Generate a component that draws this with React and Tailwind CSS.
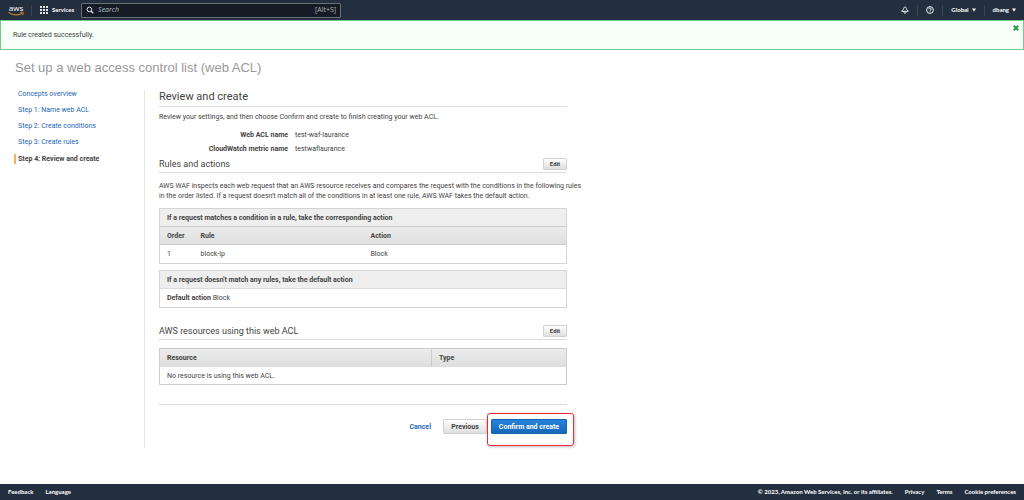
import React from "react";

function AwsLogo() {
  return (
    <span className="block font-['Open_Sans',sans-serif]">
      <span className="block text-center text-[8px] leading-[7px] font-medium">aws</span>
      <svg viewBox="0 0 16 5" className="h-[5px] w-4" fill="none" stroke="#f0972a" strokeLinecap="round" aria-hidden="true">
        <path d="M0.6 1.4C4.5 4.6 10.5 4.6 14 2.4" />
        <path d="M12.6 1.3C14 1 15.2 0.9 15.3 1.4C15.4 2 15 3 14.5 3.9" strokeWidth="0.8" />
      </svg>
    </span>
  );
}

function GridIcon() {
  return (
    <svg viewBox="0 0 8 8" className="size-2" fill="#e4e7ea" aria-hidden="true">
      {[0, 3, 6].map((y) => [0, 3, 6].map((x) => <rect key={`${x}-${y}`} x={x} y={y} width="2" height="2" />))}
    </svg>
  );
}

function Divider() {
  return <span className="h-[11px] w-px bg-[#3b4655]" />;
}

function Caret() {
  return (
    <svg viewBox="0 0 4 4" className="size-1" fill="#fff" aria-hidden="true">
      <path d="M0 0.5h4L2 3.7z" />
    </svg>
  );
}

function TopBar() {
  return (
    <header className="flex h-5 items-center bg-[#232f3e] pr-2 pl-2 font-[Lato,sans-serif] text-[6px] leading-[8px] font-bold text-white">
      <a href="#home" aria-label="AWS home"><AwsLogo /></a>
      <span className="ml-[7px] flex"><Divider /></span>
      <button type="button" className="ml-2 flex items-center gap-1">
        <GridIcon />
        Services
      </button>
      <label className="ml-[7px] flex h-[15px] w-[260px] items-center rounded-[1px] border border-[#687078] bg-[#161c26] px-1 font-['Open_Sans',sans-serif]">
        <svg viewBox="0 0 8 8" className="size-2 shrink-0" fill="none" stroke="#eaeded" aria-hidden="true">
          <circle cx="3.4" cy="3.4" r="2.3" />
          <path d="M5.1 5.1l2.1 2.1" strokeWidth="1.3" />
        </svg>
        <input type="text" aria-label="Search" placeholder="Search" className="ml-1 min-w-0 flex-1 bg-transparent text-[7px] font-normal outline-none placeholder:text-[#b5bcc2] placeholder:italic" />
        <span className="text-[7px] font-normal text-[#aab7b8]">[Alt+S]</span>
      </label>
      <div className="ml-auto flex items-center gap-2">
        <button type="button" aria-label="Notifications">
          <svg viewBox="0 0 8 8" className="size-2" fill="none" stroke="#eaeded" strokeLinejoin="round" aria-hidden="true">
            <path d="M4 0.7C2.9 1.3 2.7 2.3 2.4 3.3L0.6 5.3h6.8L5.6 3.3C5.3 2.3 5.1 1.3 4 0.7zM3 5.5v1.1l1 .8 1-.8V5.5" />
          </svg>
        </button>
        <Divider />
        <button type="button" aria-label="Help">
          <svg viewBox="0 0 8 8" className="size-2" fill="none" stroke="#eaeded" aria-hidden="true">
            <circle cx="4" cy="4" r="3.4" />
            <path d="M2.8 3.2c0-1.7 2.4-1.5 2.4-.1 0 .9-1.2.9-1.2 1.8M4 5.5v.9" />
          </svg>
        </button>
        <Divider />
        <button type="button" className="flex items-center gap-[3px]">Global <Caret /></button>
        <Divider />
        <button type="button" className="flex items-center gap-[3px]">dbang <Caret /></button>
      </div>
    </header>
  );
}

const steps = ["Concepts overview", "Step 1: Name web ACL", "Step 2: Create conditions", "Step 3: Create rules"];

function Steps() {
  return (
    <nav className="w-[131px] shrink-0 border-r border-[#e6e6e6]">
      <ul>
        {steps.map((step) => (
          <li key={step} className="h-4 pl-1 leading-[8px]">
            <a href="#step" className="text-[#1f66b8]">{step}</a>
          </li>
        ))}
        <li aria-current="step" className="border-l-2 border-[#f2b267] pl-[2px] leading-[10px] font-bold">Step 4: Review and create</li>
      </ul>
    </nav>
  );
}

function SectionHeading({ children }) {
  return (
    <div className="flex items-center justify-between border-b border-[#ddd]">
      <h3 className="text-[9px] leading-[16px]">{children}</h3>
      <button type="button" className="h-3 w-6 rounded-[1px] border border-[#d0d0d0] bg-linear-to-b from-white to-[#dedede] text-[6px] leading-[8px] font-bold">Edit</button>
    </div>
  );
}

function App() {
  return (
    <div className="flex min-h-screen flex-col bg-white font-[Roboto,sans-serif] text-[7px] leading-[10px] text-[#444]">
      <TopBar />
      <div role="status" className="flex h-[30px] items-start justify-between border border-[#74c98d] bg-[#f6fff8] pt-1 pr-1 pl-3">
        <p className="pt-[5px]">Rule created successfully.</p>
        <button type="button" aria-label="Dismiss">
          <svg viewBox="0 0 6 6" className="size-[6px]" stroke="#159447" strokeWidth="1.8" aria-hidden="true">
            <path d="M0.7 0.7l4.6 4.6M5.3 0.7L0.7 5.3" />
          </svg>
        </button>
      </div>
      <h1 className="mt-2 ml-[15px] font-['Liberation_Sans',sans-serif] text-[13px] leading-5 text-[#999]">Set up a web access control list (web ACL)</h1>
      <div className="mt-3 mb-9 flex pl-[14px]">
        <Steps />
        <main className="ml-[14px] w-[408px] pb-[14px]">
          <h2 className="border-b border-[#ddd] pb-[2px] text-[11px] leading-[14px]">Review and create</h2>
          <p className="mt-[5px]">Review your settings, and then choose Confirm and create to finish creating your web ACL.</p>
          <dl className="mt-[6px] grid grid-cols-[129px_1fr] gap-x-[7px] leading-[14px]">
            <dt className="text-right font-bold">Web ACL name</dt>
            <dd>test-waf-laurance</dd>
            <dt className="text-right font-bold">CloudWatch metric name</dt>
            <dd>testwaflaurance</dd>
          </dl>
          <SectionHeading>Rules and actions</SectionHeading>
          <p className="mt-2 whitespace-nowrap">
            AWS WAF inspects each web request that an AWS resource receives and compares the request with the conditions in the following rules
            <br />
            in the order listed. If a request doesn't match all of the conditions in at least one rule, AWS WAF takes the default action.
          </p>
          <table className="mt-[7px] w-full table-fixed border-collapse border border-[#d5d5d5] text-left">
            <colgroup><col className="w-[34px]" /><col className="w-[170px]" /><col /></colgroup>
            <thead>
              <tr className="h-[18px] border-b border-[#ccc] bg-[#eee]">
                <th colSpan={3} className="pl-[7px]">If a request matches a condition in a rule, take the corresponding action</th>
              </tr>
              <tr className="h-[18px] border-b border-[#ccc] bg-linear-to-b from-[#ececec] to-[#dfdfdf]">
                <th className="pl-[7px]">Order</th>
                <th className="pl-[7px]">Rule</th>
                <th className="pl-[7px]">Action</th>
              </tr>
            </thead>
            <tbody>
              <tr className="h-[19px]">
                <td className="pl-[7px]">1</td>
                <td className="pl-[7px]">block-ip</td>
                <td className="pl-[7px]">Block</td>
              </tr>
            </tbody>
          </table>
          <table className="mt-[6px] w-full border-collapse border border-[#d5d5d5] text-left">
            <thead>
              <tr className="h-[18px] border-b border-[#ddd] bg-[#eee]">
                <th className="pl-[7px]">If a request doesn't match any rules, take the default action</th>
              </tr>
            </thead>
            <tbody>
              <tr className="h-[19px]"><td className="pl-[7px]"><b>Default action</b> Block</td></tr>
            </tbody>
          </table>
          <div className="mt-[15px]">
            <SectionHeading>AWS resources using this web ACL</SectionHeading>
          </div>
          <table className="mt-2 w-full table-fixed border-collapse border border-[#ccc] text-left">
            <colgroup><col className="w-[272px]" /><col /></colgroup>
            <thead>
              <tr className="h-[18px] border-b border-[#ddd] bg-linear-to-b from-[#ececec] to-[#dfdfdf]">
                <th className="border-r border-[#ccc] pl-[7px]">Resource</th>
                <th className="pl-[7px]">Type</th>
              </tr>
            </thead>
            <tbody>
              <tr className="h-[18px]"><td colSpan={2} className="pl-[7px]">No resource is using this web ACL.</td></tr>
            </tbody>
          </table>
          <div className="mt-[19px] flex items-center justify-end border-t border-[#ddd] pt-[14px] font-bold">
            <a href="#cancel" className="text-[#1f66b8]">Cancel</a>
            <button type="button" className="ml-3 h-[15px] w-11 rounded-[1px] border border-[#d0d0d0] bg-linear-to-b from-white to-[#dedede]">Previous</button>
            <div className="relative ml-1">
              <button type="button" className="h-[15px] w-[76px] rounded-[1px] border border-[#1763b0] bg-linear-to-b from-[#2583dd] to-[#1767ba] text-white">Confirm and create</button>
              <span className="pointer-events-none absolute -top-[6px] -right-[7px] -left-1 h-[33px] rounded-[3px] border border-[#f02b35] shadow-[1px_1px_3px_#0004]" />
            </div>
          </div>
        </main>
      </div>
      <footer className="mt-auto flex h-4 items-center gap-3 bg-[#232f3e] px-2 font-[Lato,sans-serif] text-[6px] leading-[8px] font-bold text-white">
        <a href="#feedback">Feedback</a>
        <a href="#language">Language</a>
        <span className="ml-auto">© 2023, Amazon Web Services, Inc. or its affiliates.</span>
        <a href="#privacy">Privacy</a>
        <a href="#terms">Terms</a>
        <a href="#cookies">Cookie preferences</a>
      </footer>
    </div>
  );
}

export default App;
